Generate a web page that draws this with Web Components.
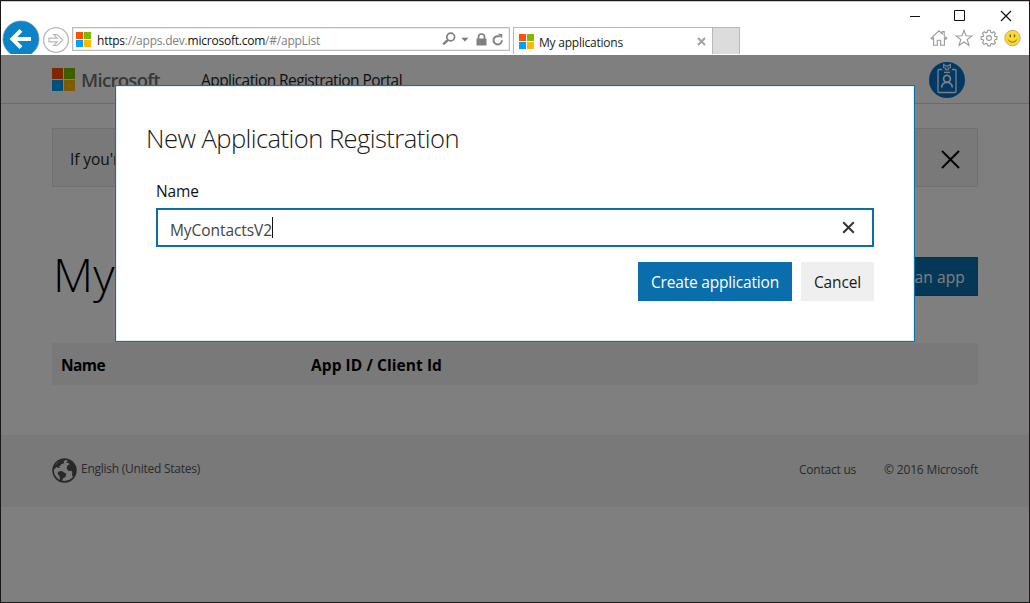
<!DOCTYPE html>
<html lang="en">
<head>
<meta charset="utf-8">
<title>My applications</title>
<style>
html,body{margin:0;padding:0}
body{width:1030px;height:603px;overflow:hidden;font-family:"Open Sans","Noto Sans",sans-serif;color:#1a1a1a;font-size:15.5px}
</style>
</head>
<body>
<browser-window></browser-window>
<script>
const define=(name,css,html)=>customElements.define(name,class extends HTMLElement{
  constructor(){super();this.attachShadow({mode:'open'}).innerHTML=`<style>:host,*{box-sizing:border-box}svg{display:block;flex:none}${css}</style>${html}`;}
});

/* A single line of text whose tracking is adjusted to span a given width. */
customElements.define('fit-text',class extends HTMLElement{
  constructor(){super();this.attachShadow({mode:'open'}).innerHTML='<style>:host{display:block;flex:none;white-space:pre}span{display:inline-block}</style><span><slot></slot></span>';}
  connectedCallback(){
    this.style.width=this.getAttribute('w')+'px';
    const s=this.shadowRoot.querySelector('span');
    const d=(+this.getAttribute('w')-s.getBoundingClientRect().width)/this.textContent.length;
    s.style.letterSpacing=d.toFixed(3)+'px';
  }
});

define('ms-logo',`:host{display:grid;flex:none;width:var(--s,15px);height:var(--s,15px);grid-template:1fr 1fr/1fr 1fr;gap:1px}
i:nth-of-type(1){background:#ff4f00}i:nth-of-type(2){background:#7fba00}i:nth-of-type(3){background:#00a2f3}i:nth-of-type(4){background:#ffb900}`,
`<i></i><i></i><i></i><i></i>`);

define('address-bar',`:host{display:flex;flex:none;align-items:center;width:438px;height:24px;border:1px solid #bcbcbc;box-shadow:inset 0 0 0 1px #ececec;padding:0 5px 0 3px;font-size:12px;color:#808080}
fit-text{margin-left:6px;margin-top:2px}b{font-weight:400;color:#111}.sp{flex:1}`,
`<ms-logo></ms-logo><fit-text w="223"><b>https</b>://apps.dev.<b>microsoft.com</b>/#/appList</fit-text><span class="sp"></span>
<svg width="14" height="14" viewBox="0 0 14 14" fill="none" stroke="#808080"><circle cx="8.7" cy="5" r="3.9" stroke-width="1.7"/><path d="M6 7.8 1.2 12.3" stroke-width="2.3"/></svg>
<svg width="8" height="5" viewBox="0 0 8 5" style="margin-left:5px"><path d="M.4.7h7L3.9 4.4z" fill="#777"/></svg>
<svg width="11" height="13" viewBox="0 0 11 13" style="margin-left:7px"><path d="M.5 5.5h10v7H.5z" fill="#808080"/><path d="M2.5 6V4a3 3 0 0 1 6 0v2" fill="none" stroke="#808080" stroke-width="1.7"/></svg>
<svg width="12" height="13" viewBox="0 0 12 13" style="margin-left:5px" fill="none" stroke="#808080" stroke-width="1.9"><path d="M9.9 7.2A4.2 4.2 0 1 1 6.6 3.2"/><path d="M5.9.7 10.2 1v4.6z" fill="#808080" stroke="none"/><path d="M5 3.5h3" stroke-width="1.4"/></svg>`);

define('browser-tab',`:host{display:flex;flex:none;align-items:center;width:200px;height:27px;margin-left:3px;border:1px solid #b8b8b8;border-bottom:0;padding:0 6px 0 5px;font-size:12px;color:#222}
fit-text{margin:2px 0 0 5px}.sp{flex:1}`,
`<ms-logo></ms-logo><fit-text w="84">My applications</fit-text><span class="sp"></span>
<svg width="9" height="9" viewBox="0 0 9 9"><path d="M1 1l7 7M8 1 1 8" stroke="#a2a2a2" stroke-width="2"/></svg>`);

define('browser-chrome',`:host{display:flex;flex-direction:column;flex:none;height:54px;background:#fff;border-top:1px solid #ccc}
.win{display:flex;height:25px;justify-content:flex-end;align-items:center;padding-right:17px;gap:34px;padding-top:2px}
.bar{display:flex;height:28px;align-items:flex-start}
.back{margin:-7px 0 0 1px}.fwd{margin:-1px 0 0 2px}address-bar{margin-left:2px}
.blank{width:27px;height:27px;background:#dcdcdc;border:1px solid #b8b8b8;border-left:0;border-bottom:0}
.tools{display:flex;margin-left:auto;padding:2px 8px 0 0;gap:7px}`,
`<div class="win">
<svg width="12" height="12" viewBox="0 0 12 12"><path d="M0 6.5h10" stroke="#111"/></svg>
<svg width="11" height="11" viewBox="0 0 11 11" style="margin:0 1px 0 -2px"><path d="M.5.5h10v10H.5z" fill="none" stroke="#111"/></svg>
<svg width="12" height="12" viewBox="0 0 12 12"><path d="M1 1l10 10M11 1 1 11" stroke="#111" stroke-width="1.2"/></svg></div>
<div class="bar">
<svg class="back" width="38" height="34" viewBox="0 0 38 34"><circle cx="19" cy="19" r="18" fill="#0a83c8" stroke="#6d8fa3" stroke-width=".8"/><path d="M29 19H11M19 10.4 10.4 19l8.6 8.6" fill="none" stroke="#fff" stroke-width="4"/></svg>
<svg class="fwd" width="28" height="28" viewBox="0 0 28 28" fill="none" stroke="#b8b8b8"><circle cx="14" cy="14" r="12.4" stroke-width="1.3"/><path d="M7 12.2h8.2L11.7 8.5h3.4l5.6 5.5-5.6 5.5h-3.4l3.5-3.7H7z" stroke-width="1.2"/></svg>
<address-bar></address-bar><browser-tab></browser-tab><div class="blank"></div>
<div class="tools">
<svg width="18" height="18" viewBox="0 0 18 18" fill="none" stroke="#999" stroke-width="1.1"><path d="M1.3 9.2 9 1.8l3.2 3V2.6h2v4.2l2.6 2.4-.9 1-1.5-1.2v7.3h-3.7v-5H7.3v5H3.6V9l-1.5 1.2z"/></svg>
<svg width="18" height="18" viewBox="0 0 18 18" fill="none" stroke="#999" stroke-width="1.1"><path d="M9 1.3l2 5.4 6 .2-4.8 3.6L14 16.4 9 13l-5 3.4 1.8-5.9L1 6.9l6-.2z"/></svg>
<svg width="18" height="18" viewBox="0 0 18 18" fill="none" stroke="#999" stroke-width="1.1"><path d="M7.7 1.2h2.6l.4 2 1.4.6 1.7-1.1 1.7 1.7-1.1 1.8.5 1.2 2 .4v2.5l-2 .4-.5 1.3 1.1 1.7-1.7 1.8-1.8-1.1-1.3.5-.4 2H7.7l-.4-2-1.3-.5-1.8 1.1-1.7-1.8L3.6 12l-.5-1.3-2-.4V7.8l2-.4.5-1.2-1.1-1.8 1.7-1.7 1.8 1.1 1.3-.6z"/><circle cx="9" cy="9" r="2.4"/></svg>
<svg width="17" height="18" viewBox="0 0 17 18" style="margin-left:-1px"><circle cx="8.5" cy="9" r="7.7" fill="#fbd932" stroke="#b9aa70" stroke-width=".9"/><path d="M6.3 5.4v2.8M10.5 5.4v2.8" stroke="#6b5a1b" stroke-width="1.3"/><path d="M4.3 10.6c1.6 3.4 6.8 3.4 8.4 0" fill="none" stroke="#806c1b"/></svg>
</div></div>`);

define('portal-header',`:host{display:flex;flex:none;align-items:center;height:49px;padding:0 64px 0 51px;border-bottom:1px solid #d6d6d6}
ms-logo{--s:23px}.ms{font-weight:600;font-size:18.6px;line-height:24px;color:#707070;margin:1px 0 0 6px}
.t{margin:2px 0 0 41px;line-height:24px;color:#222}svg{margin:2px 0 0 auto}`,
`<ms-logo></ms-logo><fit-text class="ms" w="79">Microsoft</fit-text><fit-text class="t" w="201">Application Registration Portal</fit-text>
<svg width="36" height="36" viewBox="0 0 36 36"><circle cx="18" cy="18" r="18" fill="#0072c6"/><g fill="none" stroke="#fff" stroke-width="1.3"><rect x="9" y="7.5" width="18" height="23" rx="1"/><path d="M15 10.4h6" stroke-width="1.4"/><circle cx="18" cy="16.8" r="3.4" stroke-width="1.7"/><path d="M12.7 25.4c0-6.7 10.6-6.7 10.6 0" stroke-width="1.8"/></g><path d="M13 6.2h10v2.2H13z" fill="#0072c6"/><path d="M14.6 2.4 18 4.3l3.4-1.9v3.2l-2.2.6v1.5h-2.4V6.2l-2.2-.6z" fill="#0072c6" stroke="#fff" stroke-width="1.1"/></svg>`);

define('notice-bar',`:host{display:flex;flex:none;align-items:center;height:59px;margin-top:24px;padding:0 17px 0 17px;background:#f2f2f2;border:1px solid #e2e2e2;color:#222}svg{margin-left:auto}fit-text{margin-top:2px}`,
`<fit-text w="58">If you're</fit-text><svg width="19" height="19" viewBox="0 0 19 19" style="margin-top:3px"><path d="M1 1l17 17M18 1 1 18" stroke="#000" stroke-width="2"/></svg>`);

define('page-title',`:host{display:flex;flex:none;justify-content:space-between;height:86px;margin-top:45px}
.h{font-weight:300;font-size:46.5px;line-height:84px;color:#000;margin-left:1px}
button{display:flex;align-items:center;justify-content:center;font:inherit;border:1px solid #0c6293;background:#0a6ead;color:#fff;width:110px;height:39px;margin-top:25px;padding:1px 0 0}`,
`<fit-text class="h" w="325">My applications</fit-text><button><fit-text w="84">Add an app</fit-text></button>`);

define('app-table',`:host{display:flex;flex:none;align-items:center;height:42px;margin-top:25px;background:#f2f2f2;padding:2px 0 0 9px;color:#000;font-weight:700}fit-text+fit-text{margin-left:206px}`,
`<fit-text w="44">Name</fit-text><fit-text w="131">App ID / Client Id</fit-text>`);

define('portal-footer',`:host{display:flex;flex:none;align-items:center;height:72px;margin-top:50px;padding:0 51px;background:#f2f2f2;color:#555;font-size:12px}
svg{margin-top:-2px}.l{margin:-5px 0 0 4px}.c{margin:-3px 0 0 auto}.r{margin:-3px 0 0 28px}`,
`<svg width="25" height="25" viewBox="0 0 25 25"><circle cx="12.5" cy="12.5" r="11.4" fill="none" stroke="#505050" stroke-width="1.6"/><g fill="#505050"><path d="M4 6.5 8 2.5l4-1 1 1.3-1.6.6 1 1.8-3 .8-1 1.7-1.6.4 1.2 1.5-1.2.3-2.2-1L2 11.5 1.6 9z"/><path d="M6.7 13.4 10 13l4.3 2.7-.7 3-2.5 1.6-1.3 3-1.7-.8-.6-4.2-2-2.7z"/><path d="M14.8 3.7 17 2l5 4 2.2 5-.7 5-2 3.5-1.5-2.2.3-3-1-1.6-2.7.2-2-2.4.8-3 2.3-1.2-1.6-1.5-1.5.2z"/></g></svg>
<fit-text class="l" w="119">English (United States)</fit-text><fit-text class="c" w="57">Contact us</fit-text><fit-text class="r" w="94">© 2016 Microsoft</fit-text>`);

define('registration-dialog',`:host{display:flex;flex-direction:column;width:800px;height:257px;background:#fff;border:1px solid #0a70b0;box-shadow:inset 0 0 0 1px #dcf0fa;padding:0 40px}
.h{font-weight:300;font-size:25.6px;line-height:36px;margin:35px 0 0 -10px;color:#1a1a1a}
.lab{margin-top:23px;line-height:22px;color:#111}
.input{display:flex;align-items:center;height:39px;margin-top:6px;border:2px solid #0a6ead;padding:0 17px 0 12px;color:#444}
.input fit-text{margin-top:4px}.caret{width:1px;height:21px;background:#111;margin-top:-1px}.input svg{margin-left:auto}
.row{display:flex;justify-content:flex-end;gap:9px;margin-top:15px}
button{display:flex;align-items:center;justify-content:center;height:39px;border:0;padding:1px 0 0;font:inherit;background:#efefef;color:#1a1a1a;width:73px}
.p{width:154px;background:#0a6ead;color:#fff}`,
`<fit-text class="h" w="313">New Application Registration</fit-text><fit-text class="lab" w="43">Name</fit-text>
<div class="input"><fit-text w="102">MyContactsV2</fit-text><i class="caret"></i><svg width="13" height="13" viewBox="0 0 13 13"><path d="M1.2 1.2l10.6 10.6M11.8 1.2 1.2 11.8" stroke="#333" stroke-width="2"/></svg></div>
<div class="row"><button class="p"><fit-text w="128">Create application</fit-text></button><button><fit-text w="47">Cancel</fit-text></button></div>`);

define('portal-page',`:host{display:block;position:relative;flex:1;background:#fff;overflow:hidden}
.main{display:flex;flex-direction:column;padding:0 51px}
.overlay{position:absolute;inset:0;background:rgba(0,0,0,.5);display:flex;justify-content:center;align-items:flex-start;padding-top:30px}`,
`<portal-header></portal-header><div class="main"><notice-bar></notice-bar><page-title></page-title><app-table></app-table></div><portal-footer></portal-footer>
<div class="overlay"><registration-dialog></registration-dialog></div>`);

define('browser-window',`:host{display:flex;flex-direction:column;width:1030px;height:603px;border:1px solid #1a1819;background:#fff}`,
`<browser-chrome></browser-chrome><portal-page></portal-page>`);
</script>
</body>
</html>
